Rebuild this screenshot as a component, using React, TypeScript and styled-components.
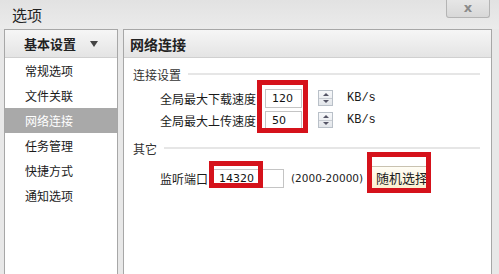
import styled, { createGlobalStyle } from "styled-components";

const GlobalStyle = createGlobalStyle`
    body {
        margin: 0;
        font-family: "Noto Sans CJK SC", "Liberation Sans", sans-serif;
        color: #1a1a1a;
    }
`;

const Window = styled.div`
    width: 499px;
    height: 274px;
    background: #e8e8e8;
    overflow: hidden;
    display: flex;
    flex-direction: column;
`;

const TitleBar = styled.div`
    height: 29px;
    flex: none;
    display: flex;
    justify-content: space-between;
    padding-left: 12px;
    background: linear-gradient(#e2e2e2, #ebebeb);
`;

const Title = styled.div`
    font-size: 15px;
    line-height: 29px;
    color: #222;
`;

const CloseButton = styled.div`
    width: 42px;
    height: 17px;
    margin-right: 9px;
    border: 1px solid #b4b4b4;
    border-top: none;
    border-radius: 0 0 3px 3px;
    background: linear-gradient(#e6e6e6, #d8d8d8);
    color: #8a8a8a;
    font-family: "DejaVu Sans", sans-serif;
    font-size: 13px;
    font-weight: bold;
    line-height: 16px;
    text-align: center;
`;

const Body = styled.div`
    flex: 1;
    display: flex;
    gap: 5px;
    padding: 0 7px 0 4px;
`;

const SidePanel = styled.div`
    width: 112px;
    height: 260px;
    border: 1px solid #a7a7a7;
    background: #fff;
    flex: none;
`;

const PanelHeader = styled.div<{ $size: number; $pad: number }>`
    height: 27px;
    display: flex;
    align-items: center;
    padding-left: ${(p) => p.$pad}px;
    border-bottom: 1px solid #d0d0d0;
    background: linear-gradient(#f6f6f6, #e4e4e4);
    font-size: ${(p) => p.$size}px;
    font-weight: bold;
    color: #222;
`;

const Arrow = styled.span`
    margin-left: 14px;
    width: 0;
    height: 0;
    border-left: 4.5px solid transparent;
    border-right: 4.5px solid transparent;
    border-top: 6px solid #444;
`;

const SideItem = styled.div<{ $active?: boolean }>`
    height: 25px;
    line-height: 25px;
    padding-left: 20px;
    font-size: 12px;
    background: ${(p) => (p.$active ? "#a9a9a9" : "transparent")};
    color: ${(p) => (p.$active ? "#fff" : "#1a1a1a")};
`;

const MainPanel = styled.div`
    flex: 1;
    height: 260px;
    border: 1px solid #a7a7a7;
    background: #fff;
    position: relative;
`;

const Content = styled.div`
    padding: 7px 11px 0 9px;
`;

const SectionTitle = styled.div<{ $top: number }>`
    display: flex;
    align-items: center;
    gap: 7px;
    height: 18px;
    margin-top: ${(p) => p.$top}px;
    font-size: 12px;
    color: #333;
    &::after {
        content: "";
        flex: 1;
        height: 2px;
        background: #e6e6e6;
    }
`;

const Row = styled.div<{ $top: number; $height: number }>`
    display: flex;
    align-items: center;
    height: ${(p) => p.$height}px;
    margin-top: ${(p) => p.$top}px;
    padding-left: 27px;
    font-size: 12px;
`;

const Label = styled.span<{ $width: number }>`
    width: ${(p) => p.$width}px;
    flex: none;
`;

const NumberInput = styled.div<{ $width: number }>`
    width: ${(p) => p.$width}px;
    height: 19px;
    box-sizing: border-box;
    border: 1px solid #c4c4c4;
    padding-left: 6px;
    font-family: "DejaVu Sans", sans-serif;
    font-size: 11px;
    line-height: 17px;
    color: #111;
`;

const Spinner = styled.div`
    width: 15px;
    height: 16px;
    margin-left: 16px;
    box-sizing: border-box;
    border: 1px solid #b9c0c8;
    display: flex;
    flex-direction: column;
    background: linear-gradient(#f7f8fa, #e3e6ea);
`;

const SpinHalf = styled.div<{ $up?: boolean }>`
    flex: 1;
    display: flex;
    align-items: center;
    justify-content: center;
    border-top: ${(p) => (p.$up ? "none" : "1px solid #c8ccd2")};
    &::before {
        content: "";
        border-left: 3px solid transparent;
        border-right: 3px solid transparent;
        ${(p) =>
            p.$up
                ? "border-bottom: 3px solid #556;"
                : "border-top: 3px solid #556;"}
    }
`;

const Unit = styled.span`
    margin-left: 14px;
    font-family: "Liberation Mono", monospace;
    font-size: 12px;
`;

const Range = styled.span`
    margin-left: 7px;
    font-family: "DejaVu Sans", sans-serif;
    font-size: 10.5px;
    color: #222;
`;

const PickButton = styled.div`
    margin-left: 5px;
    width: 61px;
    height: 24px;
    box-sizing: border-box;
    border: 1px solid #c9c2b0;
    border-radius: 2px;
    background: linear-gradient(#fffdf5, #fbefcf);
    font-size: 13px;
    line-height: 22px;
    padding-left: 7px;
    color: #222;
`;

const Highlight = styled.div<{ $x: number; $y: number; $w: number; $h: number }>`
    position: absolute;
    left: ${(p) => p.$x}px;
    top: ${(p) => p.$y}px;
    width: ${(p) => p.$w}px;
    height: ${(p) => p.$h}px;
    box-sizing: border-box;
    border: 5px solid #d5121b;
    pointer-events: none;
`;

const SpinBox = () => (
    <Spinner>
        <SpinHalf $up />
        <SpinHalf />
    </Spinner>
);

const sideItems = ["常规选项", "文件关联", "网络连接", "任务管理", "快捷方式", "通知选项"];

export default function App() {
    return (
        <Window>
            <GlobalStyle />
            <TitleBar>
                <Title>选项</Title>
                <CloseButton>x</CloseButton>
            </TitleBar>
            <Body>
                <SidePanel>
                    <PanelHeader $size={13} $pad={19}>
                        基本设置
                        <Arrow />
                    </PanelHeader>
                    {sideItems.map((item) => (
                        <SideItem key={item} $active={item === "网络连接"}>
                            {item}
                        </SideItem>
                    ))}
                </SidePanel>
                <MainPanel>
                    <PanelHeader $size={14} $pad={6}>
                        网络连接
                    </PanelHeader>
                    <Content>
                        <SectionTitle $top={0}>连接设置</SectionTitle>
                        <Row $top={4} $height={22}>
                            <Label $width={105}>全局最大下载速度</Label>
                            <NumberInput $width={37}>120</NumberInput>
                            <SpinBox />
                            <Unit>KB/s</Unit>
                        </Row>
                        <Row $top={0} $height={22}>
                            <Label $width={105}>全局最大上传速度</Label>
                            <NumberInput $width={37}>50</NumberInput>
                            <SpinBox />
                            <Unit>KB/s</Unit>
                        </Row>
                        <SectionTitle $top={8}>其它</SectionTitle>
                        <Row $top={9} $height={24}>
                            <Label $width={52}>监听端口</Label>
                            <NumberInput $width={72}>14320</NumberInput>
                            <Range>(2000-20000)</Range>
                            <PickButton>随机选择</PickButton>
                        </Row>
                    </Content>
                    <Highlight $x={133} $y={50} $w={51} $h={53} />
                    <Highlight $x={85} $y={131} $w={54} $h={27} />
                    <Highlight $x={243} $y={122} $w={64} $h={41} />
                </MainPanel>
            </Body>
        </Window>
    );
}
